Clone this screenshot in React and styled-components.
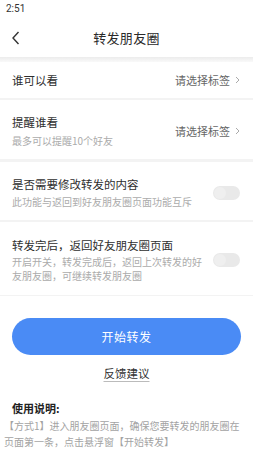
import React from "react";
import styled, { createGlobalStyle } from "styled-components";

const Global = createGlobalStyle`
  html, body { margin: 0; padding: 0; background: #fff; }
  body { font-family: "Noto Sans CJK SC", "Noto Sans", sans-serif; -webkit-font-smoothing: antialiased; }
  * { box-sizing: border-box; }
`;

const Page = styled.div`
  width: 253px;
  height: 450px;
  overflow: hidden;
  background: #fff;
  display: flex;
  flex-direction: column;
`;

const StatusBar = styled.div`
  height: 18px;
  padding: 1px 0 0 6px;
  font-family: Roboto, "Noto Sans", sans-serif;
  font-size: 10px;
  line-height: 15px;
  color: #333;
`;

const NavBar = styled.div`
  height: 39px;
  display: flex;
  align-items: center;
  justify-content: center;
  position: relative;
`;

const Back = styled.div`
  position: absolute;
  left: 10px;
  top: 12px;
  width: 12px;
  height: 16px;
  display: flex;
`;

const Title = styled.div`
  font-size: 13px;
  color: #2a2a2a;
  letter-spacing: 0.3px;
`;

const Shade = styled.div`
  height: 5px;
  background: linear-gradient(#ececec, #f9f9f9);
`;

const Divider = styled.div`
  height: ${(p) => p.$h || 2}px;
  background: #f3f3f3;
`;

const Row = styled.div`
  height: ${(p) => p.$h}px;
  display: flex;
  align-items: center;
  justify-content: space-between;
  padding: ${(p) => p.$pt || 0}px 12px 0 12px;
`;

const TextCol = styled.div`
  display: flex;
  flex-direction: column;
  gap: ${(p) => p.$gap || 3}px;
`;

const RowTitle = styled.div`
  font-size: 11.5px;
  line-height: 16px;
  color: #2e2e2e;
`;

const Sub = styled.div`
  font-size: 10px;
  line-height: 14px;
  color: #ababab;
  max-width: 190px;
`;

const Picker = styled.div`
  display: flex;
  align-items: center;
  gap: 5px;
  font-size: 11px;
  color: #666;
  margin-right: 1px;
`;

const Toggle = styled.div`
  width: 27px;
  height: 14px;
  border-radius: 7px;
  background: #e9e9e9;
  position: relative;
  margin-right: 1px;
  &::after {
    content: "";
    position: absolute;
    left: 1px;
    top: 1px;
    width: 12px;
    height: 12px;
    border-radius: 50%;
    background: #efefef;
  }
`;

const Bottom = styled.div`
  display: flex;
  flex-direction: column;
  align-items: center;
  padding: 22px 12px 0;
`;

const StartButton = styled.button`
  width: 229px;
  height: 37px;
  border: none;
  border-radius: 19px;
  background: #4a8bf5;
  color: #fff;
  font-family: inherit;
  font-size: 12px;
  letter-spacing: 0.5px;
`;

const Feedback = styled.div`
  margin-top: 10px;
  font-size: 11.5px;
  color: #333;
  line-height: 16px;
  text-decoration: underline;
  text-underline-offset: 3px;
  text-decoration-color: #bbb;
`;

const Guide = styled.div`
  align-self: stretch;
  margin-top: 19px;
  display: flex;
  flex-direction: column;
  gap: 2px;
`;

const GuideTitle = styled.div`
  font-size: 11px;
  font-weight: 700;
  color: #222;
  line-height: 16px;
`;

const GuideText = styled.div`
  font-size: 10px;
  color: #a3a3a3;
  line-height: 16px;
  margin: 0 -6px 0 -8px;
`;

const Chevron = () => (
  <svg width="5" height="8" viewBox="0 0 5 8">
    <path d="M1 1l3 3-3 3" fill="none" stroke="#aaa" strokeWidth="1" />
  </svg>
);

export default function App() {
  return (
    <>
      <Global />
      <Page>
        <StatusBar>2:51</StatusBar>
        <NavBar>
          <Back>
            <svg width="12" height="16" viewBox="0 0 12 16">
              <path d="M8.5 2L3 8l5.5 6" fill="none" stroke="#333" strokeWidth="1.4" />
            </svg>
          </Back>
          <Title>转发朋友圈</Title>
        </NavBar>
        <Shade />
        <Row $h={36}>
          <RowTitle>谁可以看</RowTitle>
          <Picker>
            请选择标签
            <Chevron />
          </Picker>
        </Row>
        <Divider $h={2} />
        <Row $h={60} $pt={3}>
          <TextCol $gap={4}>
            <RowTitle>提醒谁看</RowTitle>
            <Sub>最多可以提醒10个好友</Sub>
          </TextCol>
          <Picker>
            请选择标签
            <Chevron />
          </Picker>
        </Row>
        <Divider $h={3} />
        <Row $h={58} $pt={3}>
          <TextCol $gap={3}>
            <RowTitle>是否需要修改转发的内容</RowTitle>
            <Sub>此功能与返回到好友朋友圈页面功能互斥</Sub>
          </TextCol>
          <Toggle />
        </Row>
        <Divider $h={2} />
        <Row $h={73} $pt={3}>
          <TextCol $gap={2}>
            <RowTitle>转发完后，返回好友朋友圈页面</RowTitle>
            <Sub>开启开关，转发完成后，返回上次转发的好友朋友圈，可继续转发朋友圈</Sub>
          </TextCol>
          <Toggle />
        </Row>
        <Divider $h={1} />
        <Bottom>
          <StartButton>开始转发</StartButton>
          <Feedback>反馈建议</Feedback>
          <Guide>
            <GuideTitle>使用说明:</GuideTitle>
            <GuideText>【方式1】进入朋友圈页面，确保您要转发的朋友圈在页面第一条，点击悬浮窗【开始转发】</GuideText>
          </Guide>
        </Bottom>
      </Page>
    </>
  );
}
